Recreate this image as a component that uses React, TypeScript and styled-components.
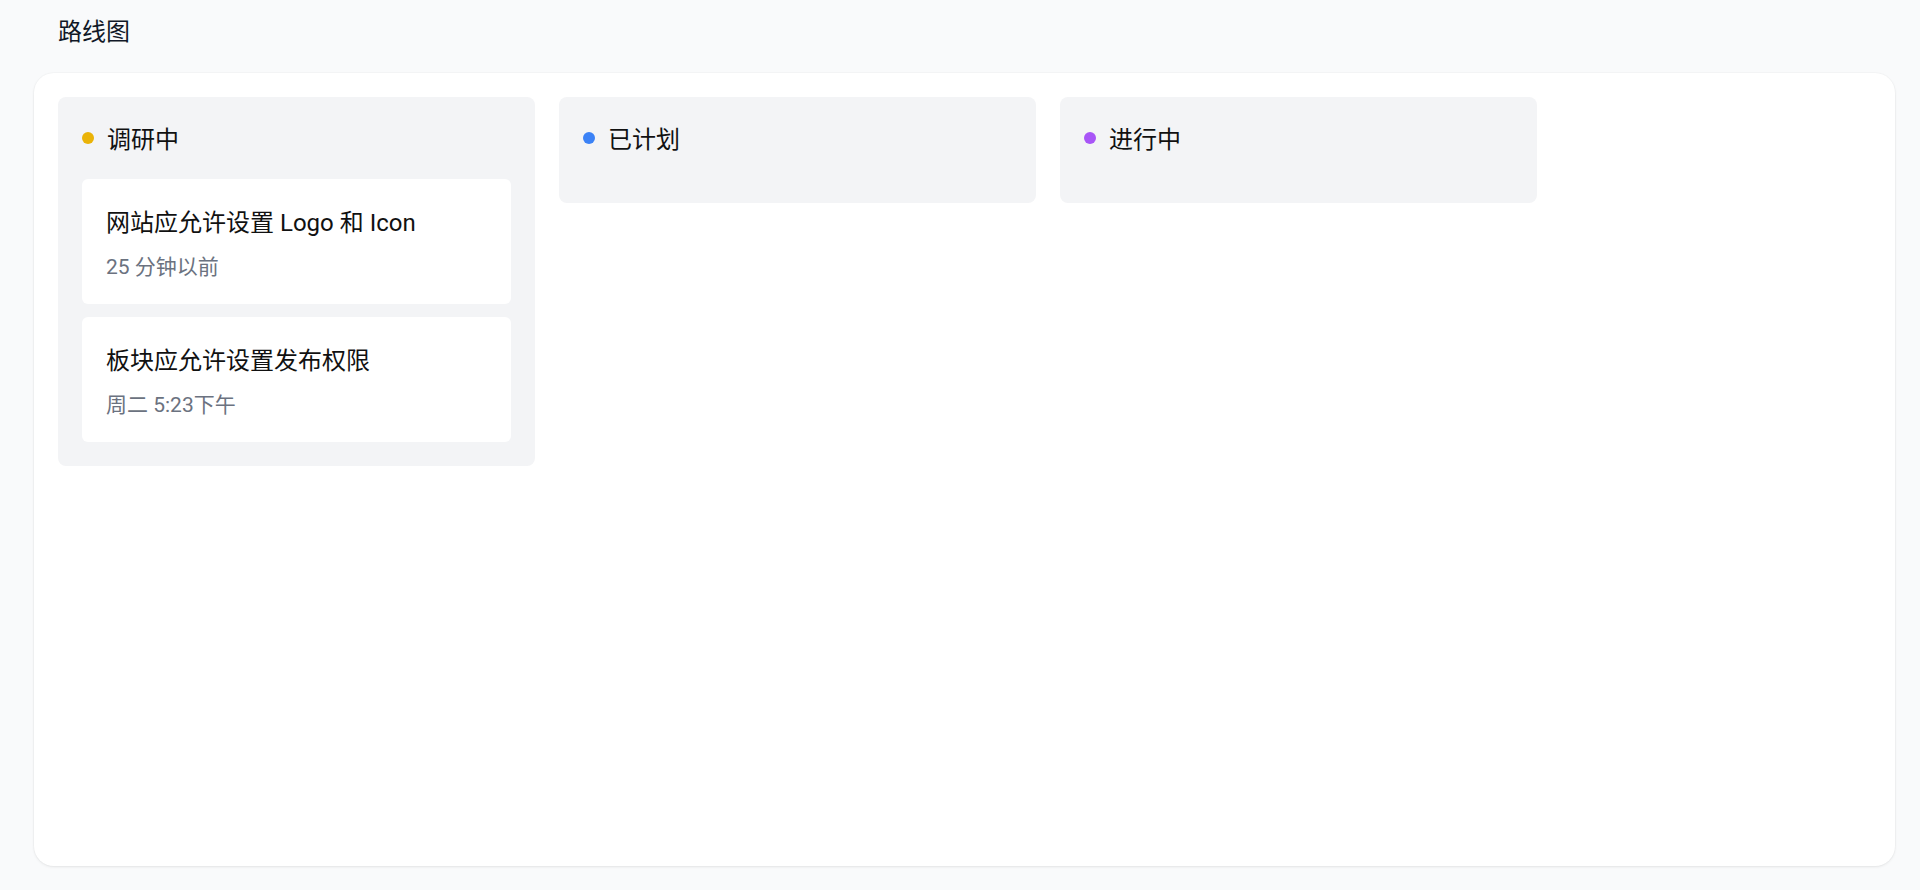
import styled, { createGlobalStyle } from "styled-components";

interface Item {
  title: string;
  time: string;
}

interface Lane {
  name: string;
  color: string;
  items: Item[];
}

const lanes: Lane[] = [
  {
    name: "调研中",
    color: "#eab308",
    items: [
      { title: "网站应允许设置 Logo 和 Icon", time: "25 分钟以前" },
      { title: "板块应允许设置发布权限", time: "周二 5:23下午" },
    ],
  },
  { name: "已计划", color: "#3b82f6", items: [] },
  { name: "进行中", color: "#a855f7", items: [] },
];

const App = () => {
  return (
    <>
      <GlobalStyle />
      <Page>
        <PageTitle>路线图</PageTitle>
        <Board>
          {lanes.map((lane) => (
            <Column key={lane.name}>
              <ColumnHeader>
                <Dot $color={lane.color} />
                <span>{lane.name}</span>
              </ColumnHeader>
              <CardList>
                {lane.items.map((item) => (
                  <Card key={item.title}>
                    <CardTitle>{item.title}</CardTitle>
                    <CardTime>{item.time}</CardTime>
                  </Card>
                ))}
              </CardList>
            </Column>
          ))}
        </Board>
      </Page>
    </>
  );
};

export default App;

const GlobalStyle = createGlobalStyle`
  * {
    box-sizing: border-box;
  }
  body {
    margin: 0;
    background: #f9fafb;
    font-family: Roboto, "Noto Sans CJK SC", sans-serif;
    color: #111111;
  }
`;

const Page = styled.div`
  height: 100vh;
  display: flex;
  flex-direction: column;
  padding: 14px 25px 24px 34px;
`;

const PageTitle = styled.h1`
  margin: 0 0 23px 24px;
  font-size: 24px;
  font-weight: 400;
  line-height: 36px;
  color: #111827;
`;

const Board = styled.div`
  flex: 1;
  display: flex;
  align-items: flex-start;
  gap: 24px;
  padding: 24px;
  background: #ffffff;
  border-radius: 20px;
  box-shadow: 0 1px 3px rgba(0, 0, 0, 0.08), 0 0 0 1px rgba(0, 0, 0, 0.015);
`;

const Column = styled.div`
  width: 477px;
  padding: 24px;
  background: #f3f4f6;
  border-radius: 8px;
`;

const ColumnHeader = styled.div`
  height: 32px;
  display: flex;
  align-items: center;
  gap: 13px;
  font-size: 24px;
  color: #111111;
`;

const Dot = styled.span<{ $color: string }>`
  width: 12px;
  height: 12px;
  border-radius: 50%;
  background: ${(p) => p.$color};
  flex-shrink: 0;
  margin-top: 2px;
`;

const CardList = styled.div`
  margin-top: 26px;
  display: flex;
  flex-direction: column;
  gap: 13px;
`;

const Card = styled.div`
  background: #ffffff;
  border-radius: 6px;
  padding: 24px 24px 21px;
`;

const CardTitle = styled.div`
  font-size: 24px;
  line-height: 40px;
  color: #111111;
`;

const CardTime = styled.div`
  margin-top: 8px;
  font-size: 21px;
  line-height: 32px;
  color: #6b7280;
`;
